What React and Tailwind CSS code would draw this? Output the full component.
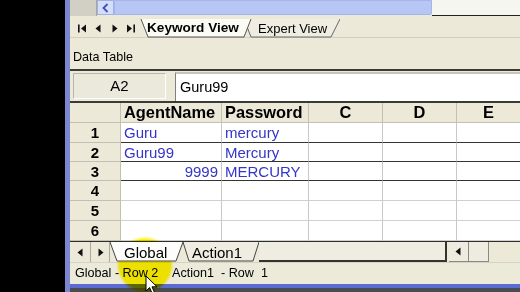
import React from "react";

const rows = [
  { n: "1", a: "Guru", p: "mercury", dark: true, h: "h-[20px]" },
  { n: "2", a: "Guru99", p: "Mercury", dark: true, h: "h-[19px]" },
  { n: "3", a: "9999", p: "MERCURY", dark: true, right: true, h: "h-[19px]" },
  { n: "4", a: "", p: "", h: "h-[20px]" },
  { n: "5", a: "", p: "", h: "h-[20px]" },
  { n: "6", a: "", p: "", h: "h-[20px]" },
];

function Tri({ dir = "left", bar = false }) {
  return (
    <svg width="9" height="9" viewBox="0 0 9 9">
      {dir === "left" ? (
        <>
          {bar && <rect x="0" y="0.5" width="1.6" height="8" fill="#111" />}
          <polygon points={bar ? "8,0.5 3,4.5 8,8.5" : "6.5,0.5 1.5,4.5 6.5,8.5"} fill="#111" />
        </>
      ) : (
        <>
          <polygon points={bar ? "1,0.5 6,4.5 1,8.5" : "2.5,0.5 7.5,4.5 2.5,8.5"} fill="#111" />
          {bar && <rect x="7.4" y="0.5" width="1.6" height="8" fill="#111" />}
        </>
      )}
    </svg>
  );
}

function Cursor() {
  return (
    <svg width="14" height="20" viewBox="0 0 14 20">
      <path d="M1 1 L1 16 L4.6 12.6 L7.2 18.6 L9.6 17.6 L7 11.8 L12 11.8 Z" fill="#fff" stroke="#000" strokeWidth="1" strokeLinejoin="round" />
    </svg>
  );
}

export default function App() {
  return (
    <div className="w-[520px] h-[292px] flex bg-black overflow-hidden font-['Liberation_Sans',Arial,sans-serif] text-black">
      <div className="w-[65px] bg-black" />
      <div className="w-[5px] bg-[#7c86cf]" />
      <div className="flex-1 flex flex-col bg-[#ece9d8] relative">
        {/* top scroll strip */}
        <div className="h-[17px] flex items-start">
          <div className="w-[27px] h-[16px] bg-[#d2cfc5] border-r border-[#a9a69a]" />
          <div className="w-[17px] h-[15px] bg-[#d5ddf7] border border-[#9fb0e6] flex items-center justify-center">
            <svg width="7" height="10" viewBox="0 0 7 10">
              <path d="M5.5 1 L1.5 5 L5.5 9" stroke="#3d4fc2" strokeWidth="1.8" fill="none" />
            </svg>
          </div>
          <div className="w-[318px] h-[15px] bg-[#b7c6f4] border border-[#a5b5ea] rounded-br-[2px]" />
          <div className="flex-1 h-[16px] bg-[#f6f6f0] border-b border-[#222]" />
        </div>

        {/* view tabs */}
        <div className="h-[21px] flex items-stretch border-b border-[#d2cfc1]">
          <div className="w-[70px] flex items-center gap-[7px] pl-[8px] pt-[2px]">
            <Tri dir="left" bar />
            <Tri dir="left" />
            <Tri dir="right" />
            <Tri dir="right" bar />
          </div>
          <div className="relative z-10 w-[112px] flex items-center">
            <svg className="absolute inset-0" width="112" height="21" viewBox="0 0 112 21">
              <polygon points="1,2 8,20 104,20 111,2" fill="#fbfbf6" />
              <polyline points="1,2 8,20 104,20 111,2" fill="none" stroke="#555" strokeWidth="1" />
            </svg>
            <span className="relative pl-[7px] pt-[2px] text-[13.6px] font-bold leading-none">Keyword View</span>
          </div>
          <div className="relative w-[96px] -ml-[8px] flex items-center">
            <svg className="absolute inset-0" width="96" height="21" viewBox="0 0 96 21">
              <polygon points="0,2 7,20 87,20 96,2" fill="#efede2" />
              <polyline points="0,2 7,20 87,20 96,2" fill="none" stroke="#666" strokeWidth="1" />
            </svg>
            <span className="relative pl-[14px] pt-[2px] text-[13px] leading-none">Expert View</span>
          </div>
        </div>

        {/* label */}
        <div className="h-[31px] flex items-end pl-[3px] pb-[5px] text-[12.6px] leading-none">Data Table</div>
        <div className="h-[2px] bg-[#3a3a36]" />

        {/* cell reference row */}
        <div className="h-[30px] flex items-stretch pt-[1px]">
          <div className="ml-[3px] mt-[1px] mb-[2px] w-[93px] bg-[#ebe8dc] border-t border-l border-[#b9b6aa] border-b border-r border-b-white border-r-white flex items-center justify-center text-[15px]">
            A2
          </div>
          <div className="ml-[9px] flex-1 bg-white border-t-2 border-l border-[#c7c4b8] border-l-[#808080] flex items-center pl-[4px] text-[14.5px]">
            Guru99
          </div>
        </div>

        {/* grid */}
        <div className="border-t-2 border-[#3a3a36] bg-white">
          <div className="grid grid-cols-[51px_101px_87px_74px_74px_1fr] h-[20px] bg-[#ece9d8] text-[16.4px] font-bold leading-none">
            <div className="border-r border-b border-[#c3c0b3]" />
            <div className="border-r border-b border-[#c3c0b3] flex items-center pl-[3px]">AgentName</div>
            <div className="border-r border-b border-[#c3c0b3] flex items-center pl-[3px]">Password</div>
            <div className="border-r border-b border-[#c3c0b3] flex items-center justify-center">C</div>
            <div className="border-r border-b border-[#c3c0b3] flex items-center justify-center">D</div>
            <div className="border-b border-[#c3c0b3] flex items-center justify-center">E</div>
          </div>
          {rows.map((r) => (
            <div key={r.n} className={`grid grid-cols-[51px_101px_87px_74px_74px_1fr] ${r.h} text-[15px] leading-none`}>
              <div className="bg-[#ece9d8] border-r border-b border-[#c3c0b3] flex items-center justify-center font-bold">
                {r.n}
              </div>
              <div className={`border-r border-[#c8c8c8] border-b ${r.dark ? "border-b-[#333]" : "border-b-[#d0d0d0]"} flex items-center ${r.right ? "justify-end pr-[3px]" : "pl-[3px]"} text-[#3535c6]`}>
                {r.a}
              </div>
              <div className={`border-r border-[#c8c8c8] border-b ${r.dark ? "border-b-[#333]" : "border-b-[#d0d0d0]"} flex items-center pl-[3px] text-[#3535c6]`}>
                {r.p}
              </div>
              <div className={`border-r border-[#c8c8c8] border-b ${r.dark ? "border-b-[#333]" : "border-b-[#d0d0d0]"}`} />
              <div className={`border-r border-[#c8c8c8] border-b ${r.dark ? "border-b-[#333]" : "border-b-[#d0d0d0]"}`} />
              <div className={`border-b ${r.dark ? "border-[#333]" : "border-[#d0d0d0]"}`} />
            </div>
          ))}
        </div>

        {/* sheet tabs */}
        <div className="h-[21px] flex items-stretch border-t border-[#2e2e2a]">
          <div className="w-[21px] flex items-center justify-center border-r border-[#aaa79b]">
            <Tri dir="left" />
          </div>
          <div className="w-[19px] flex items-center justify-center border-r border-[#aaa79b]">
            <Tri dir="right" />
          </div>
          <div className="relative z-10 w-[74px] flex items-center">
            <svg className="absolute inset-0" width="74" height="20" viewBox="0 0 74 20">
              <polygon points="0,0 7,19 66,19 73,0" fill="#fdfdfb" />
              <polyline points="0,0 7,19 66,19 73,0" fill="none" stroke="#444" strokeWidth="1" />
            </svg>
            <span className="relative pl-[14px] text-[15px] leading-none">Global</span>
          </div>
          <div className="relative w-[76px] -ml-[1px] flex items-center">
            <svg className="absolute inset-0" width="76" height="20" viewBox="0 0 76 20">
              <polygon points="0,0 6,19 70,19 76,0" fill="#efede2" />
              <polyline points="0,0 6,19 70,19 76,0" fill="none" stroke="#444" strokeWidth="1" />
            </svg>
            <span className="relative pl-[9px] text-[15px] leading-none">Action1</span>
          </div>
          <div className="w-[188px] border-b-2 border-r-2 border-[#33332f] bg-[#efede2]" />
          <div className="ml-[2px] w-[20px] border-r border-b border-[#8c897d] bg-[#eeece0] flex items-center justify-center">
            <Tri dir="left" />
          </div>
          <div className="w-[20px] border-r border-b border-[#8c897d] bg-[#eeece0]" />
          <div className="flex-1" />
        </div>

        {/* status bar */}
        <div className="h-[22px] flex items-center text-[12.6px] leading-none bg-[#ecead9] border-t border-[#d6d3c6]">
          <span className="pl-[5px] w-[102px]">Global - Row 2</span>
          <span>Action1&nbsp; - Row&nbsp; 1</span>
        </div>
        <div className="h-[4px] bg-[#5c6bd3]" />
        <div className="h-[4px] bg-[#4a4a52]" />

        {/* click highlight */}
        <div className="absolute left-[48px] top-[238px] w-[54px] h-[54px] rounded-full bg-[#fff400] mix-blend-multiply blur-[1px]" />
        <div className="absolute left-[75px] top-[275px]">
          <Cursor />
        </div>
      </div>
    </div>
  );
}
